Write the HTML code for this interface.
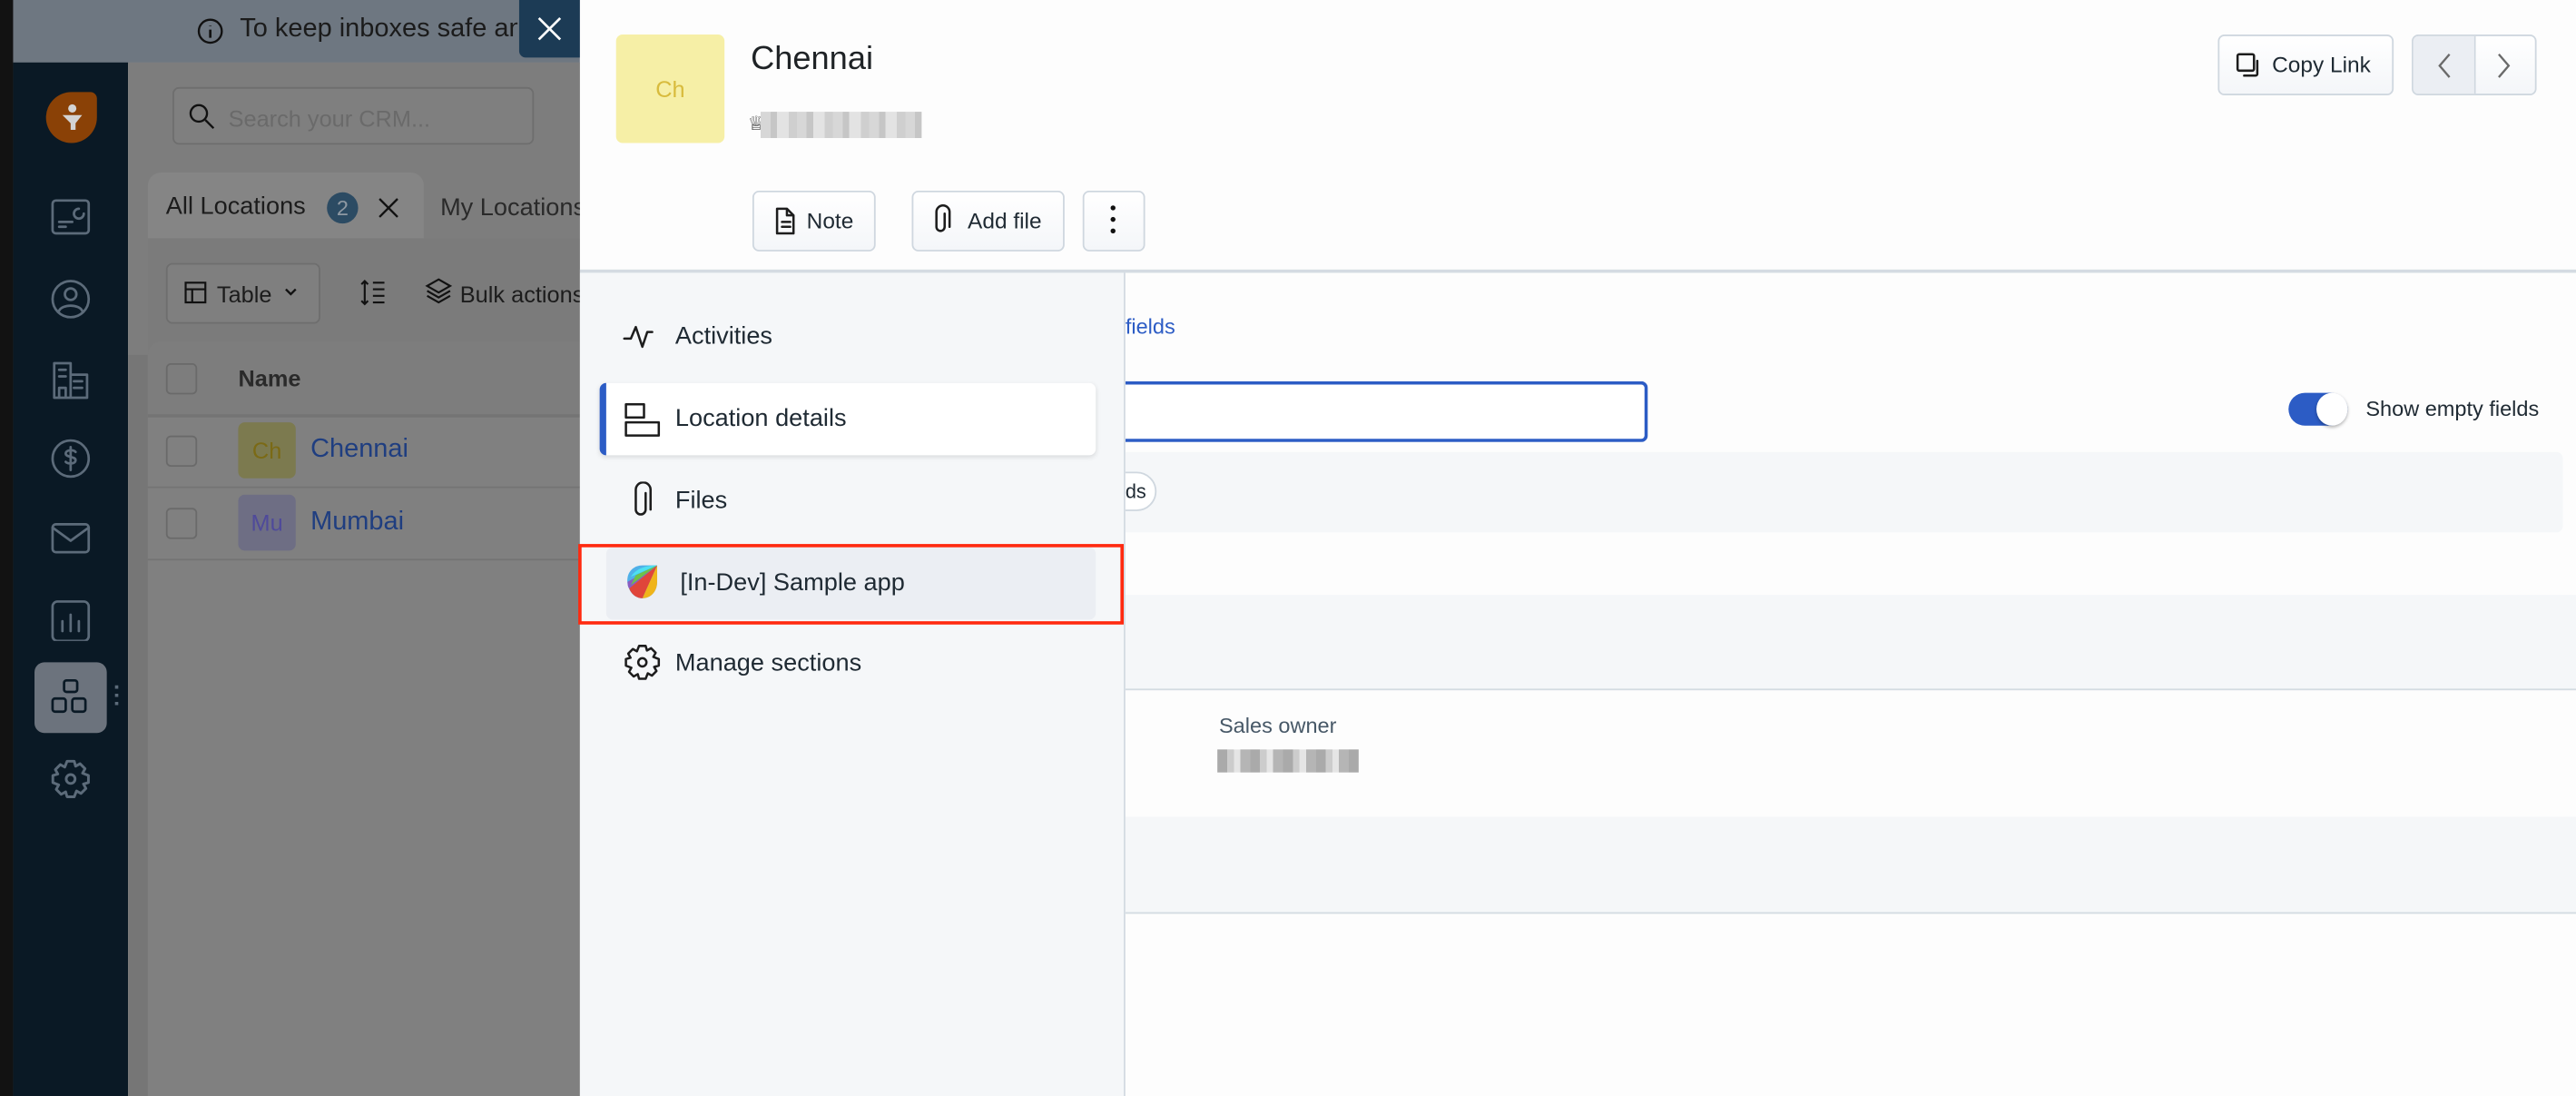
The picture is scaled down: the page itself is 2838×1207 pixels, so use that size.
<!DOCTYPE html>
<html><head><meta charset="utf-8"><style>
html,body{margin:0;padding:0;width:2838px;height:1206px;overflow:hidden;background:#fff}
#r{position:absolute;left:0;top:0;width:1568px;height:667px;transform:scale(1.80995);transform-origin:0 0;font-family:"Liberation Sans",sans-serif;overflow:hidden}
.a{position:absolute}
.ic{position:absolute;fill:none;stroke:#1d1d1d;stroke-width:1.4;stroke-linecap:round;stroke-linejoin:round}
.sb{position:absolute;fill:none;stroke:#5c6b7a;stroke-width:1.5;stroke-linecap:round;stroke-linejoin:round}
.btn{position:absolute;border:1px solid #cfd7df;border-radius:4px;background:linear-gradient(#fff,#f4f6f9);box-sizing:border-box;font-size:13px;color:#12344d}
.nav{position:absolute;left:369px;width:298px;height:44px;font-size:15px;color:#1f2a33}
</style></head><body><div id="r">
<!-- dimmed background app -->
<div class="a" style="left:0;top:0;width:8px;height:667px;background:#121212"></div>
<div class="a" style="left:8px;top:0;width:345px;height:38px;background:#6e7781;border-bottom:1px solid #7b8a9b"></div>
<svg class="a" style="left:118px;top:9px" width="20" height="20" viewBox="0 0 20 20"><circle cx="10" cy="10" r="7" fill="none" stroke="#111" stroke-width="1.3"/><path d="M10 9v5M10 6.5v.3" stroke="#111" stroke-width="1.5"/></svg>
<div class="a" style="left:146px;top:9px;font-size:16px;color:#1b1b1b;white-space:nowrap;width:169px;overflow:hidden">To keep inboxes safe and</div>
<div class="a" style="left:316px;top:0;width:37px;height:35px;background:#1c3b55;border-radius:0 0 0 4px"></div>
<svg class="a" style="left:326px;top:9px" width="17" height="17" viewBox="0 0 17 17"><path d="M2 2l13 13M15 2L2 15" stroke="#fff" stroke-width="1.5"/></svg>
<div class="a" style="left:8px;top:38px;width:70px;height:629px;background:#0a1925"></div>
<div class="a" style="left:28px;top:56px;width:31px;height:31px;background:#8a4106;border-radius:50%;border-top-right-radius:4px"></div>
<svg class="a" style="left:36px;top:62px" width="16" height="18" viewBox="0 0 16 18"><circle cx="8" cy="4" r="2.5" fill="#d3d3d3"/><path d="M2 8h12l-4 5v4H7v-4z" fill="#d3d3d3"/></svg>
<svg class="sb" style="left:30px;top:120px" width="26" height="26" viewBox="0 0 26 26"><rect x="2" y="2" width="22" height="20" rx="2"/><path d="M6 15h8M6 18h4M18 7a3 3 0 1 0 3 3"/></svg>
<svg class="sb" style="left:30px;top:169px" width="26" height="26" viewBox="0 0 26 26"><circle cx="13" cy="13" r="11"/><circle cx="13" cy="10" r="3.5"/><path d="M6 20c2-4 12-4 14 0"/></svg>
<svg class="sb" style="left:30px;top:218px" width="26" height="26" viewBox="0 0 26 26"><path d="M3 24V3h10v21M13 10h10v14H3M6 7h4M6 11h4M15 14h5M15 18h5M6 24v-6h4v6"/></svg>
<svg class="sb" style="left:30px;top:266px" width="26" height="26" viewBox="0 0 26 26"><circle cx="13" cy="13" r="11"/><path d="M16 9c-1-1.5-6-1.5-6 1s6 1.5 6 4-5 2.5-6 1M13 6v14"/></svg>
<svg class="sb" style="left:30px;top:315px" width="26" height="26" viewBox="0 0 26 26"><rect x="2" y="4" width="22" height="17" rx="2"/><path d="M2 6l11 8 11-8"/></svg>
<svg class="sb" style="left:30px;top:364px" width="26" height="26" viewBox="0 0 26 26"><rect x="2" y="2" width="22" height="24" rx="3"/><path d="M8 20v-6M13 20v-10M18 20v-6"/></svg>
<div class="a" style="left:21px;top:403px;width:44px;height:43px;background:#6c737d;border-radius:6px"></div>
<svg class="a" style="left:30px;top:412px" width="26" height="26" viewBox="0 0 26 26" fill="none" stroke="#0a1925" stroke-width="1.5"><rect x="9" y="2" width="8" height="7" rx="1.5"/><rect x="2" y="13" width="8" height="8" rx="1.5"/><rect x="14" y="13" width="8" height="8" rx="1.5"/></svg>
<div class="a" style="left:70px;top:417px;width:2px;height:14px;background:repeating-linear-gradient(#5c6b7a 0 2px,transparent 2px 5px)"></div>
<svg class="sb" style="left:30px;top:461px" width="26" height="26" viewBox="0 0 24 24"><circle cx="12" cy="12" r="2.5"/><path d="M10 2h4l.8 2.8 2.5-1.4 2.8 2.8-1.4 2.5L22 10v4l-2.8.8 1.4 2.5-2.8 2.8-2.5-1.4L14 22h-4l-.8-2.8-2.5 1.4-2.8-2.8 1.4-2.5L2 14v-4l2.8-.8-1.4-2.5 2.8-2.8 2.5 1.4z"/></svg>
<div class="a" style="left:78px;top:38px;width:275px;height:629px;background:#808080"></div>
<div class="a" style="left:78px;top:216px;width:12px;height:451px;background:#767676"></div>
<div class="a" style="left:78px;top:38px;width:275px;height:178px;background:#7d7d7d"></div>
<div class="a" style="left:105px;top:53px;width:220px;height:35px;border:1px solid #6e6e6e;border-radius:4px;background:#7f7f7f;box-sizing:border-box"></div>
<svg class="a" style="left:114px;top:62px" width="18" height="18" viewBox="0 0 18 18"><circle cx="7" cy="7" r="5" fill="none" stroke="#111" stroke-width="1.3"/><path d="M11 11l5 5" stroke="#111" stroke-width="1.3"/></svg>
<div class="a" style="left:139px;top:64px;font-size:14px;color:#6a6a6a">Search your CRM...</div>
<div class="a" style="left:90px;top:105px;width:168px;height:112px;background:#858585;border-radius:8px 8px 0 0"></div>
<div class="a" style="left:101px;top:117px;font-size:15px;color:#1c1c1c">All Locations</div>
<div class="a" style="left:199px;top:117px;width:19px;height:19px;border-radius:50%;background:#2c4b63;color:#8f99a3;font-size:13px;text-align:center;line-height:19px">2</div>
<svg class="a" style="left:229px;top:119px" width="15" height="15" viewBox="0 0 15 15"><path d="M2 2l11 11M13 2L2 13" stroke="#111" stroke-width="1.3"/></svg>
<div class="a" style="left:268px;top:118px;font-size:15px;color:#2a2a2a">My Locations</div>
<div class="a" style="left:90px;top:145px;width:263px;height:72px;background:#7b7b7b"></div>
<div class="a" style="left:101px;top:160px;width:94px;height:37px;border:1px solid #6e6e6e;border-radius:4px;box-sizing:border-box;background:#7f7f7f"></div>
<svg class="a" style="left:112px;top:171px" width="14" height="14" viewBox="0 0 14 14" fill="none" stroke="#111" stroke-width="1.2"><rect x="1" y="1" width="12" height="12"/><path d="M1 5h12M5 5v8"/></svg>
<div class="a" style="left:132px;top:171px;font-size:14px;color:#1c1c1c">Table</div>
<svg class="a" style="left:172px;top:174px" width="10" height="8" viewBox="0 0 10 8"><path d="M2 2l3 3 3-3" fill="none" stroke="#111" stroke-width="1.3"/></svg>
<svg class="a" style="left:217px;top:168px" width="20" height="20" viewBox="0 0 20 20" fill="none" stroke="#111" stroke-width="1.2"><path d="M5 3v14M3 5l2-2 2 2M3 15l2 2 2-2M10 4h7M10 8h7M10 12h7M10 16h7"/></svg>
<svg class="a" style="left:258px;top:168px" width="18" height="18" viewBox="0 0 18 18" fill="none" stroke="#111" stroke-width="1.2"><path d="M9 2l7 4-7 4-7-4zM2 9l7 4 7-4M2 12l7 4 7-4"/></svg>
<div class="a" style="left:280px;top:171px;font-size:14px;color:#1c1c1c">Bulk actions</div>
<div class="a" style="left:90px;top:208px;width:263px;height:459px;background:#808080;border-radius:8px 0 0 0"></div>
<div class="a" style="left:90px;top:208px;width:263px;height:44px;background:#7d7d7d;border-radius:8px 0 0 0;border-bottom:2px solid #747474"></div>
<div class="a" style="left:101px;top:221px;width:17px;height:17px;border:1px solid #6a6a6a;border-radius:3px"></div>
<div class="a" style="left:145px;top:222px;font-size:14px;font-weight:bold;color:#2a2a2a">Name</div>
<div class="a" style="left:90px;top:296px;width:263px;height:1px;background:#747474"></div>
<div class="a" style="left:90px;top:340px;width:263px;height:1px;background:#747474"></div>
<div class="a" style="left:101px;top:265px;width:17px;height:17px;border:1px solid #6a6a6a;border-radius:3px"></div>
<div class="a" style="left:101px;top:309px;width:17px;height:17px;border:1px solid #6a6a6a;border-radius:3px"></div>
<div class="a" style="left:145px;top:257px;width:35px;height:34px;background:#7c7a4f;border-radius:4px;color:#7b6a15;font-size:14px;text-align:center;line-height:34px">Ch</div>
<div class="a" style="left:145px;top:301px;width:35px;height:34px;background:#6e6e84;border-radius:4px;color:#4f4a9a;font-size:14px;text-align:center;line-height:34px">Mu</div>
<div class="a" style="left:189px;top:265px;font-size:16px;color:#1f3e80">Chennai</div>
<div class="a" style="left:189px;top:309px;font-size:16px;color:#1f3e80">Mumbai</div>

<!-- drawer -->
<div class="a" style="left:353px;top:0;width:1215px;height:667px;background:#fdfdfd"></div>
<div class="a" style="left:375px;top:21px;width:66px;height:66px;background:#f6efa6;border-radius:4px;color:#d8bb3d;font-size:14px;text-align:center;line-height:66px">Ch</div>
<div class="a" style="left:457px;top:25px;font-size:20px;color:#1f2326">Chennai</div>
<div class="a" style="left:455px;top:68px;font-size:12px;color:#333">♕</div>
<div class="a" style="left:463px;top:68px;width:98px;height:16px;background:repeating-linear-gradient(90deg,#d7d7d7 0 6px,#c6c6c6 6px 10px,#e3e3e3 10px 17px,#cfcfcf 17px 22px)"></div>
<div class="btn" style="left:1350px;top:21px;width:107px;height:37px"></div>
<svg class="ic" style="left:1359px;top:30px" width="20" height="20" viewBox="0 0 20 20"><rect x="3" y="3" width="10" height="10" rx="1"/><path d="M15 7v8a1 1 0 0 1-1 1H7"/></svg>
<div class="a" style="left:1383px;top:32px;font-size:13.5px;color:#1f2a33">Copy Link</div>
<div class="btn" style="left:1468px;top:21px;width:76px;height:37px"></div>
<div class="a" style="left:1469px;top:22px;width:37px;height:35px;background:#ebeef3;border-right:1px solid #cfd7df;border-radius:3px 0 0 3px"></div>
<svg class="a" style="left:1480px;top:30px" width="16" height="20" viewBox="0 0 16 20"><path d="M11 3L5 10l6 7" fill="none" stroke="#6a6a6a" stroke-width="1.3"/></svg>
<svg class="a" style="left:1516px;top:30px" width="16" height="20" viewBox="0 0 16 20"><path d="M5 3l6 7-6 7" fill="none" stroke="#6a6a6a" stroke-width="1.3"/></svg>
<div class="btn" style="left:458px;top:116px;width:75px;height:37px"></div>
<svg class="ic" style="left:470px;top:125px" width="16" height="19" viewBox="0 0 16 19"><path d="M3 2h6l4 4v11H3zM9 2v4h4M6 10h5M6 13h5"/></svg>
<div class="a" style="left:491px;top:127px;font-size:13.5px;color:#1f2a33">Note</div>
<div class="btn" style="left:555px;top:116px;width:93px;height:37px"></div>
<svg class="ic" style="left:565px;top:124px" width="16" height="20" viewBox="0 0 16 20"><path d="M10 6v8a2.5 2.5 0 0 1-5 0V5a4 4 0 0 1 8 0v9"/></svg>
<div class="a" style="left:589px;top:127px;font-size:13.5px;color:#1f2a33">Add file</div>
<div class="btn" style="left:659px;top:116px;width:38px;height:37px"></div>
<div class="a" style="left:676px;top:125px;width:3px;height:3px;border-radius:50%;background:#111;box-shadow:0 7px #111,0 14px #111"></div>
<div class="a" style="left:353px;top:164px;width:1215px;height:2px;background:#d4dbe2"></div>
<!-- right content (behind nav) -->
<div class="a" style="left:685px;top:191px;font-size:13px;color:#2c5cc5">fields</div>
<div class="a" style="left:685px;top:232px;width:318px;height:37px;border:2px solid #2c5cc5;border-left:none;border-radius:0 4px 4px 0;box-sizing:border-box;background:#fff"></div>
<div class="a" style="left:1393px;top:239px;width:36px;height:20px;background:#2c5cc5;border-radius:10px"></div>
<div class="a" style="left:1410px;top:239px;width:19px;height:20px;background:#fff;border-radius:50%;box-shadow:0 1px 2px rgba(0,0,0,.3)"></div>
<div class="a" style="left:1440px;top:241px;font-size:13px;color:#1f2a33">Show empty fields</div>
<div class="a" style="left:685px;top:275px;width:875px;height:49px;background:#f5f7f9;border-radius:0 4px 4px 0"></div>
<div class="a" style="left:640px;top:287px;width:64px;height:24px;border:1px solid #cfd7df;border-radius:12px;box-sizing:border-box;background:#fff"></div>
<div class="a" style="left:685px;top:292px;font-size:12px;color:#1f2a33">ds</div>
<div class="a" style="left:685px;top:362px;width:883px;height:57px;background:#f5f7f9;border-bottom:1.5px solid #d4dbe2"></div>
<div class="a" style="left:742px;top:434px;font-size:13px;color:#475867">Sales owner</div>
<div class="a" style="left:741px;top:456px;width:86px;height:14px;background:repeating-linear-gradient(90deg,#aaa 0 6px,#ccc 6px 10px,#e5e5e5 10px 14px,#b5b5b5 14px 20px)"></div>
<div class="a" style="left:685px;top:497px;width:883px;height:58px;background:#f5f7f9;border-bottom:1.5px solid #d4dbe2"></div>
<!-- left nav -->
<div class="a" style="left:353px;top:166px;width:331px;height:501px;background:#f5f7f9;border-right:1px solid #d4dbe2"></div>
<svg class="ic" style="left:379px;top:193px" width="24" height="24" viewBox="0 0 24 24"><path d="M1 13h4l3-7 4 12 3-9h3"/></svg>
<div class="nav" style="top:183px"><div class="a" style="left:42px;top:13px">Activities</div></div>
<div class="a" style="left:365px;top:233px;width:302px;height:44px;background:#fff;border-radius:4px;box-shadow:0 1px 3px rgba(0,0,0,.12)"></div>
<div class="a" style="left:365px;top:233px;width:4px;height:44px;background:#2c5cc5;border-radius:4px 0 0 4px"></div>
<svg class="ic" style="left:379px;top:243px" width="24" height="24" viewBox="0 0 24 24"><rect x="2" y="3" width="11" height="8"/><rect x="2" y="14" width="20" height="8"/></svg>
<div class="a" style="left:411px;top:246px;font-size:15px;color:#1f2a33">Location details</div>
<svg class="ic" style="left:381px;top:293px" width="20" height="24" viewBox="0 0 20 24"><path d="M12 7v10a3 3 0 0 1-6 0V5a4.5 4.5 0 0 1 9 0v12"/></svg>
<div class="a" style="left:411px;top:296px;font-size:15px;color:#1f2a33">Files</div>
<div class="a" style="left:369px;top:333px;width:298px;height:44px;background:#ebeef3;border-radius:4px"></div>
<div class="a" style="left:352px;top:331px;width:332px;height:49px;border:2.5px solid #ff2a10;box-sizing:border-box"></div>
<svg class="a" style="left:379px;top:342px" width="24" height="24" viewBox="0 0 24 24"><path d="M12 2C6 2 2 7 3 13c1 6 5 9 9 9 5 0 9-4 9-10V2z" fill="#4fb0e8"/><path d="M21 2L12 22c5 0 9-4 9-10z" fill="#f0b41a"/><path d="M21 2L4 16c1 3 4 6 8 6z" fill="#e0453a"/><path d="M21 2L3 12c0 1 0 3 1 4z" fill="#8a5cc0"/><path d="M21 2L8 8 5 14z" fill="#6cc24a"/><path d="M21 2C14 2 8 4 5 9z" fill="#4de0f0"/></svg>
<div class="a" style="left:414px;top:346px;font-size:15px;color:#1f2a33">[In-Dev] Sample app</div>
<svg class="ic" style="left:379px;top:391px" width="24" height="24" viewBox="0 0 24 24"><circle cx="12" cy="12" r="2.5"/><path d="M10 2h4l.8 2.8 2.5-1.4 2.8 2.8-1.4 2.5L22 10v4l-2.8.8 1.4 2.5-2.8 2.8-2.5-1.4L14 22h-4l-.8-2.8-2.5 1.4-2.8-2.8 1.4-2.5L2 14v-4l2.8-.8-1.4-2.5 2.8-2.8 2.5 1.4z"/></svg>
<div class="a" style="left:411px;top:395px;font-size:15px;color:#1f2a33">Manage sections</div>
</div></body></html>
